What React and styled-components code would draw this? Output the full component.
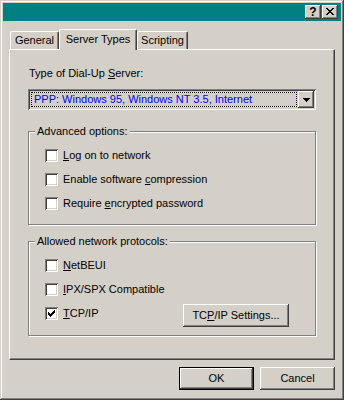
import React from 'react';
import styled, { createGlobalStyle } from 'styled-components';

const GlobalStyle = createGlobalStyle`
  html, body {
    margin: 0;
    padding: 0;
    background: #d4d0c8;
  }
  body {
    font-family: "Liberation Sans", Arial, sans-serif;
    font-size: 11px;
    color: #000;
  }
`;

const Window = styled.div`
  width: 344px;
  height: 400px;
  box-sizing: border-box;
  padding: 3px;
  background: #d4d0c8;
  box-shadow: inset -1px -1px #404040, inset 1px 1px #d4d0c8,
    inset -2px -2px #808080, inset 2px 2px #fff;
  display: flex;
  flex-direction: column;
`;

const TitleBar = styled.div`
  height: 18px;
  background: #008080;
  display: flex;
  justify-content: flex-end;
  align-items: center;
  gap: 1px;
  padding-right: 3px;
`;

const TitleButton = styled.div`
  width: 16px;
  height: 14px;
  box-sizing: border-box;
  background: #d4d0c8;
  box-shadow: inset -1px -1px #404040, inset 1px 1px #fff,
    inset -2px -2px #808080;
  display: flex;
  align-items: center;
  justify-content: center;
  font-weight: bold;
  font-size: 12px;
  line-height: 1;
  padding-bottom: 1px;
`;

const Body = styled.div`
  padding: 8px 6px 0 6px;
  display: flex;
  flex-direction: column;
`;

const TabRow = styled.div`
  display: flex;
  align-items: flex-end;
  height: 20px;
  padding-left: 1px;
`;

const Tab = styled.div`
  position: relative;
  box-sizing: border-box;
  width: ${p => p.$width}px;
  height: ${p => (p.$active ? 21 : 18)}px;
  margin-bottom: ${p => (p.$active ? -1 : 0)}px;
  z-index: ${p => (p.$active ? 1 : 0)};
  background: #d4d0c8;
  border-top: 1px solid #fff;
  border-left: 1px solid #fff;
  border-right: 1px solid #404040;
  border-radius: 2px 2px 0 0;
  box-shadow: inset -1px 0 #808080;
  display: flex;
  justify-content: center;
  align-items: ${p => (p.$active ? 'flex-start' : 'center')};
  padding-top: ${p => (p.$active ? 3 : 0)}px;
  line-height: 13px;
`;

const Panel = styled.div`
  height: 311px;
  box-sizing: border-box;
  border-top: 1px solid #fff;
  border-left: 1px solid #fff;
  border-right: 1px solid #404040;
  border-bottom: 1px solid #404040;
  box-shadow: inset -1px -1px #808080;
  padding: 17px 18px 0 18px;
  display: flex;
  flex-direction: column;
`;

const Label = styled.div`
  line-height: 13px;
  padding-left: 1px;
`;

const Combo = styled.div`
  margin-top: 9px;
  height: 21px;
  box-sizing: border-box;
  padding: 2px;
  background: #d4d0c8;
  box-shadow: inset 1px 1px #808080, inset -1px -1px #fff,
    inset 2px 2px #404040, inset -2px -2px #d4d0c8;
  display: flex;
  align-items: stretch;
`;

const ComboValue = styled.div`
  flex: 1;
  margin: 1px;
  border: 1px dotted #000;
  background: linear-gradient(#d4d0c8, #d4d0c8) padding-box, #ffff00 border-box;
  color: #0000ff;
  line-height: 13px;
  padding-left: 2px;
  display: flex;
  align-items: center;
`;

const ComboButton = styled.div`
  width: 16px;
  box-sizing: border-box;
  background: #d4d0c8;
  box-shadow: inset -1px -1px #404040, inset 1px 1px #fff,
    inset -2px -2px #808080;
  display: flex;
  align-items: center;
  justify-content: center;
`;

const Group = styled.fieldset`
  margin: ${p => p.$top}px 0 0 0;
  padding: 11px 16px ${p => p.$bottom}px 16px;
  border: 1px solid #808080;
  box-shadow: inset 1px 1px #fff, 1px 1px #fff;
  display: flex;
  flex-direction: column;
  gap: 11px;
  min-width: 0;
`;

const Legend = styled.legend`
  margin-left: -10px;
  padding: 0 2px;
  line-height: 13px;
  background: #d4d0c8;
`;

const Row = styled.div`
  display: flex;
  align-items: flex-start;
  height: ${p => p.$height || 13}px;
`;

const Check = styled.label`
  display: flex;
  align-items: center;
  gap: 5px;
  line-height: 13px;
`;

const Box = styled.span`
  width: 13px;
  height: 13px;
  box-sizing: border-box;
  background: #fff;
  box-shadow: inset 1px 1px #808080, inset -1px -1px #fff,
    inset 2px 2px #404040, inset -2px -2px #d4d0c8;
  display: flex;
  align-items: center;
  justify-content: center;
`;

const Button = styled.div`
  width: ${p => p.$width}px;
  height: 23px;
  box-sizing: border-box;
  border: ${p => (p.$default ? '1px solid #000' : 'none')};
  background: #d4d0c8;
  box-shadow: inset -1px -1px #404040, inset 1px 1px #fff,
    inset -2px -2px #808080;
  display: flex;
  align-items: center;
  justify-content: center;
  line-height: 13px;
  margin: ${p => p.$margin || 0};
`;

const Footer = styled.div`
  margin-top: 7px;
  display: flex;
  justify-content: flex-end;
  gap: 6px;
`;

function CheckMark() {
  return (
    <svg width="7" height="7" viewBox="0 0 7 7" shapeRendering="crispEdges">
      <path
        d="M6 0h1v3h-1v1h-1v1h-1v1h-1v1h-1v-1h-1v-1h-1v-3h1v1h1v1h1v-1h1v-1h1z"
        fill="#000"
      />
    </svg>
  );
}

function CheckItem({ checked, children }) {
  return (
    <Check>
      <Box>{checked && <CheckMark />}</Box>
      <span>{children}</span>
    </Check>
  );
}

export default function App() {
  return (
    <>
      <GlobalStyle />
      <Window>
        <TitleBar>
          <TitleButton>?</TitleButton>
          <TitleButton>
            <svg width="8" height="7" viewBox="0 0 8 7" shapeRendering="crispEdges">
              <path
                d="M0 0h2v1h1v1h2v-1h1v-1h2v1h-1v1h-1v1h-1v1h1v1h1v1h1v1h-2v-1h-1v-1h-2v1h-1v1h-2v-1h1v-1h1v-1h1v-1h-1v-1h-1v-1h-1z"
                fill="#000"
              />
            </svg>
          </TitleButton>
        </TitleBar>
        <Body>
          <TabRow>
            <Tab $width={49}>General</Tab>
            <Tab $width={78} $active>Server Types</Tab>
            <Tab $width={51}>Scripting</Tab>
          </TabRow>
          <Panel>
            <Label>
              Type of Dial-Up <u>S</u>erver:
            </Label>
            <Combo>
              <ComboValue>PPP: Windows 95, Windows NT 3.5, Internet</ComboValue>
              <ComboButton>
                <svg width="7" height="4" viewBox="0 0 7 4" shapeRendering="crispEdges">
                  <path d="M0 0h7v1h-1v1h-1v1h-1v1h-1v-1h-1v-1h-1v-1h-1z" fill="#000" />
                </svg>
              </ComboButton>
            </Combo>
            <Group $top={15} $bottom={14}>
              <Legend>Advanced options:</Legend>
              <Row>
                <CheckItem>
                  <u>L</u>og on to network
                </CheckItem>
              </Row>
              <Row>
                <CheckItem>
                  Enable software <u>c</u>ompression
                </CheckItem>
              </Row>
              <Row>
                <CheckItem>
                  Require <u>e</u>ncrypted password
                </CheckItem>
              </Row>
            </Group>
            <Group $top={10} $bottom={8}>
              <Legend>Allowed network protocols:</Legend>
              <Row>
                <CheckItem>
                  <u>N</u>etBEUI
                </CheckItem>
              </Row>
              <Row>
                <CheckItem>
                  <u>I</u>PX/SPX Compatible
                </CheckItem>
              </Row>
              <Row $height={20}>
                <CheckItem checked>
                  <u>T</u>CP/IP
                </CheckItem>
                <Button $width={106} $margin="-3px 10px 0 auto">
                  TC<u>P</u>/IP Settings...
                </Button>
              </Row>
            </Group>
          </Panel>
          <Footer>
            <Button $width={75} $default>OK</Button>
            <Button $width={75}>Cancel</Button>
          </Footer>
        </Body>
      </Window>
    </>
  );
}
